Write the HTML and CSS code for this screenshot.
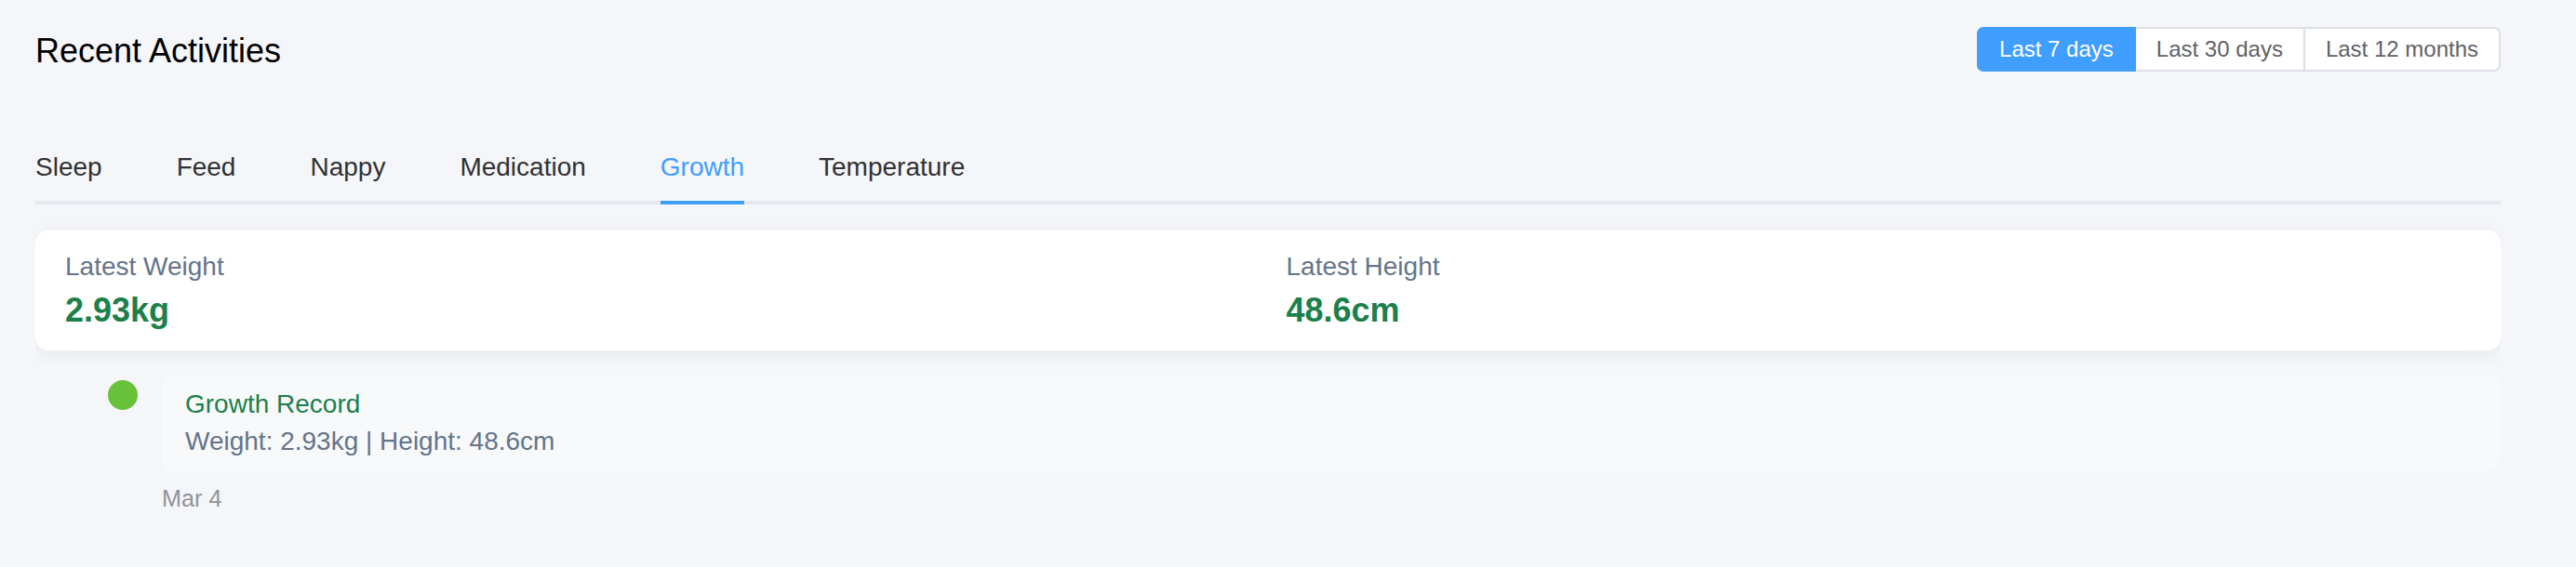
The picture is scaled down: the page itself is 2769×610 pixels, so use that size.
FILE: index.html
```html
<!DOCTYPE html>
<html lang="en">
<head>
<meta charset="utf-8">
<title>Recent Activities</title>
<link rel="stylesheet" href="styles.css">
</head>
<body>
<div class="page">
  <div class="content">
    <div class="header">
      <h2 class="title">Recent Activities</h2>
      <div class="range-group">
        <span class="range-btn active">Last 7 days</span>
        <span class="range-btn">Last 30 days</span>
        <span class="range-btn">Last 12 months</span>
      </div>
    </div>
    <div class="tabs">
      <span class="tab">Sleep</span>
      <span class="tab">Feed</span>
      <span class="tab">Nappy</span>
      <span class="tab">Medication</span>
      <span class="tab active">Growth</span>
      <span class="tab">Temperature</span>
    </div>
    <div class="summary-card">
      <div class="summary-item">
        <div class="summary-label">Latest Weight</div>
        <div class="summary-value">2.93kg</div>
      </div>
      <div class="summary-item">
        <div class="summary-label">Latest Height</div>
        <div class="summary-value">48.6cm</div>
      </div>
    </div>
    <div class="timeline">
      <div class="timeline-item">
        <span class="timeline-dot"></span>
        <div class="timeline-body">
          <div class="record">
            <div class="record-title">Growth Record</div>
            <div class="record-detail">Weight: 2.93kg | Height: 48.6cm</div>
          </div>
          <div class="timestamp">Mar 4</div>
        </div>
      </div>
    </div>
  </div>
</div>
</body>
</html>
```
FILE: styles.css
```css
* { box-sizing: border-box; }
html, body {
  margin: 0;
  padding: 0;
  background: #f5f6fa;
}
body {
  font-family: "Liberation Sans", Arial, sans-serif;
}
.page {
  padding: 0 81px 0 38px;
}
.content {
  overflow: hidden;
  padding-bottom: 40px;
}
.header {
  display: flex;
  justify-content: space-between;
  align-items: center;
  padding-top: 27px;
}
.title {
  margin: 0;
  padding-top: 4px;
  font-size: 36px;
  line-height: 48px;
  font-weight: 400;
  color: #000;
}
.range-group {
  display: flex;
}
.range-btn {
  display: block;
  font-size: 24px;
  line-height: 24px;
  padding: 10px 22px;
  border: 2px solid #dcdfe6;
  background: #fff;
  color: #606266;
  margin-left: -2px;
}
.range-btn:first-child {
  margin-left: 0;
  border-radius: 7px 0 0 7px;
}
.range-btn:last-child {
  border-radius: 0 7px 7px 0;
}
.range-btn.active {
  background: #409eff;
  border-color: #409eff;
  color: #fff;
  position: relative;
}
.tabs {
  display: flex;
  gap: 80px;
  margin-top: 67px;
  border-bottom: 4px solid #e4e7ed;
}
.tab {
  display: block;
  font-size: 28px;
  height: 74px;
  line-height: 67px;
  color: #303133;
  border-bottom: 4px solid transparent;
  margin-bottom: -4px;
}
.tab.active {
  color: #409eff;
  border-bottom-color: #409eff;
}
.summary-card {
  margin-top: 28px;
  background: #fff;
  border-radius: 14px;
  box-shadow: 0 4px 20px rgba(0, 0, 0, 0.06);
  padding: 23px 32px 22px;
  display: grid;
  grid-template-columns: 1fr 1fr;
  column-gap: 39px;
}
.summary-label {
  font-size: 28px;
  line-height: 32px;
  color: #64748b;
}
.summary-value {
  margin-top: 9px;
  font-size: 36px;
  line-height: 43px;
  font-weight: 700;
  color: #1b804a;
}
.timeline {
  margin-top: 26px;
  padding-left: 78px;
}
.timeline-item {
  display: flex;
  gap: 26px;
}
.timeline-dot {
  flex: 0 0 32px;
  width: 32px;
  height: 32px;
  margin-top: 6px;
  border-radius: 50%;
  background: #67c23a;
}
.timeline-body {
  flex: 1;
}
.record {
  background: #f8f9fb;
  border-radius: 14px;
  padding: 12px 25px;
}
.record-title {
  font-size: 28px;
  line-height: 40px;
  color: #1b804a;
}
.record-detail {
  font-size: 28px;
  line-height: 40px;
  color: #64748b;
}
.timestamp {
  margin-top: 11px;
  font-size: 25.2px;
  line-height: 37px;
  color: #909399;
}
```
